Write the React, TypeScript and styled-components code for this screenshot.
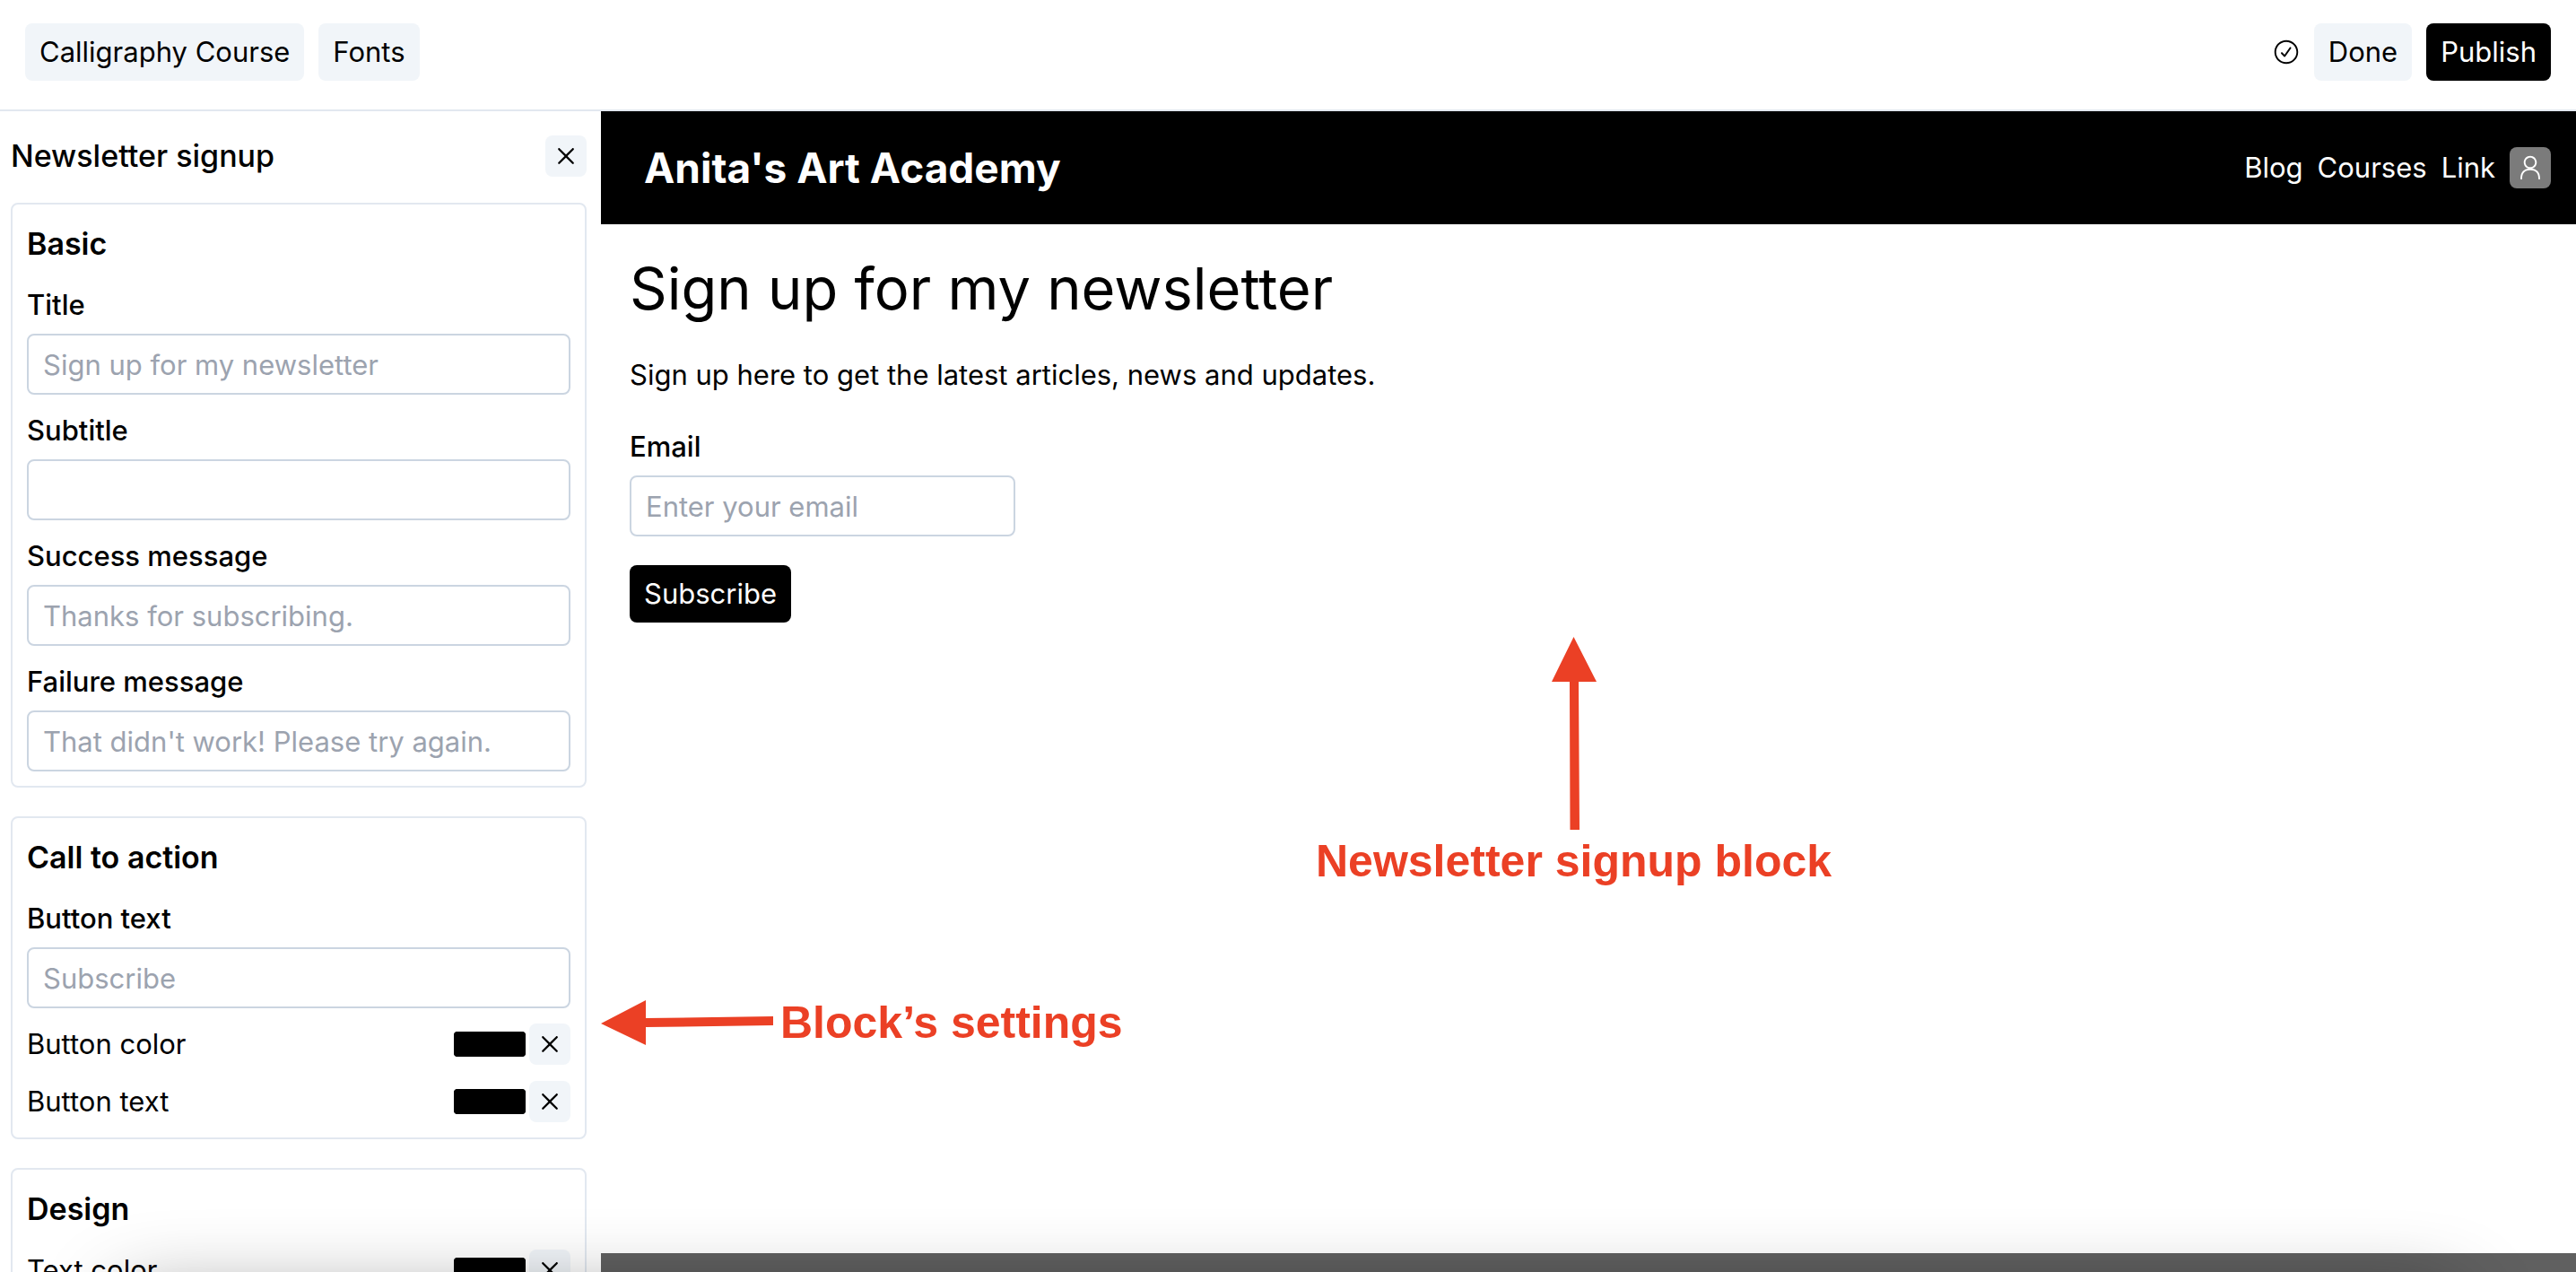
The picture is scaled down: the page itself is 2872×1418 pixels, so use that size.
import React, { useId } from "react";
import styled, { createGlobalStyle } from "styled-components";
import { RxCheckCircled, RxCross2, RxPerson } from "react-icons/rx";

const GlobalStyle = createGlobalStyle`
  *, *::before, *::after { box-sizing: border-box; }
  body {
    margin: 0;
    background: #fff;
    color: #000;
    font-family: Inter, "Liberation Sans", sans-serif;
    font-size: 31px;
    line-height: 48px;
  }
  h1, h2, h3, p { margin: 0; }
  button, input { font: inherit; color: inherit; }
  button { cursor: pointer; }
`;

const Page = styled.div`
  position: relative;
  display: flex;
  flex-direction: column;
  height: 100vh;
  overflow: hidden;
`;

const TopBar = styled.header`
  display: flex;
  flex: none;
  justify-content: space-between;
  padding: 26px 28px 32px;
  border-bottom: 2px solid #e2e8f0;
`;

const Group = styled.div`
  display: flex;
  align-items: center;
  gap: 16px;
`;

const Button = styled.button<{ $primary?: boolean }>`
  height: 64px;
  padding: 8px 16px;
  border: 0;
  border-radius: 8px;
  background: ${(p) => (p.$primary ? "#000" : "#f1f5f9")};
  color: ${(p) => (p.$primary ? "#fff" : "#000")};
`;

const SavedIcon = styled(RxCheckCircled)`
  width: 30px;
  height: 30px;
`;

const Body = styled.div`
  display: flex;
  flex: 1;
  min-height: 0;
`;

const Sidebar = styled.aside`
  display: flex;
  flex: none;
  flex-direction: column;
  gap: 28px;
  width: 670px;
  padding: 26px 16px 0 12px;
  overflow: hidden;
`;

const SidebarHead = styled.div`
  display: flex;
  flex: none;
  align-items: center;
  justify-content: space-between;
`;

const SidebarTitle = styled.h2`
  font-size: 34px;
  font-weight: 500;
  line-height: 48px;
`;

const IconButton = styled.button`
  display: flex;
  flex: none;
  align-items: center;
  justify-content: center;
  width: 46px;
  height: 46px;
  padding: 0;
  border: 0;
  border-radius: 8px;
  background: #f1f5f9;
  font-size: 30px;
`;

const Panels = styled.div`
  display: flex;
  flex-direction: column;
  gap: 32px;
`;

const Panel = styled.section`
  display: flex;
  flex-direction: column;
  gap: 16px;
  padding: 16px;
  border: 2px solid #e2e8f0;
  border-radius: 8px;
`;

const PanelTitle = styled.h3`
  font-size: 34px;
  font-weight: 600;
  line-height: 56px;
`;

const FieldBox = styled.div<{ $narrow?: boolean }>`
  display: flex;
  flex-direction: column;
  gap: 8px;
  width: ${(p) => (p.$narrow ? "430px" : "100%")};
`;

const FieldLabel = styled.label`
  font-weight: 500;
`;

const TextInput = styled.input`
  width: 100%;
  height: 68px;
  padding: 8px 16px;
  border: 2px solid #cbd5e1;
  border-radius: 8px;
  background: #fff;
  &::placeholder { color: #9ca3af; opacity: 1; }
`;

const ColorLine = styled.div`
  display: flex;
  align-items: center;
  gap: 4px;
  height: 48px;
`;

const ColorLabel = styled.label`
  flex: 1;
`;

const Swatch = styled.input`
  width: 80px;
  height: 28px;
  padding: 0;
  border: 0;
  border-radius: 4px;
  background: #000;
  appearance: none;
  &::-webkit-color-swatch-wrapper { padding: 0; }
  &::-webkit-color-swatch { border: 0; border-radius: 4px; }
`;

const Preview = styled.main`
  position: relative;
  display: flex;
  flex: 1;
  flex-direction: column;
  min-width: 0;
`;

const SiteHeader = styled.div`
  display: flex;
  flex: none;
  align-items: center;
  justify-content: space-between;
  height: 126px;
  padding: 0 28px 0 48px;
  background: #000;
  color: #fff;
`;

const Brand = styled.a`
  color: inherit;
  font-size: 46px;
  font-weight: 700;
  line-height: 64px;
  text-decoration: none;
`;

const NavLink = styled.a`
  color: inherit;
  text-decoration: none;
`;

const Avatar = styled(IconButton)`
  background: #7b7b7b;
  color: #fff;
`;

const Block = styled.form`
  display: flex;
  flex: 1;
  flex-direction: column;
  align-items: flex-start;
  gap: 32px;
  padding: 32px;
`;

const BlockTitle = styled.h1`
  font-size: 65px;
  font-weight: 400;
  line-height: 80px;
`;

const SiteFooter = styled.footer`
  flex: none;
  height: 21px;
  background: #606060;
`;

const Note = styled.div<{ $x: number; $y: number; $column?: boolean }>`
  position: absolute;
  left: ${(p) => p.$x}px;
  top: ${(p) => p.$y}px;
  display: flex;
  flex-direction: ${(p) => (p.$column ? "column" : "row")};
  align-items: center;
  gap: ${(p) => (p.$column ? "4px" : "8px")};
  color: #eb4025;
  font-family: "Liberation Sans", Arial, sans-serif;
  font-size: 50px;
  font-weight: 700;
  line-height: 60px;
  white-space: nowrap;
  pointer-events: none;
`;

const BottomShade = styled.div`
  position: absolute;
  right: 136px;
  bottom: -230px;
  left: 136px;
  height: 200px;
  box-shadow: 0 0 90px rgba(0, 0, 0, 0.44);
  pointer-events: none;
`;

function Field({ label, placeholder, narrow, type = "text" }: {
  label: string;
  placeholder?: string;
  narrow?: boolean;
  type?: string;
}) {
  const id = useId();
  return (
    <FieldBox $narrow={narrow}>
      <FieldLabel htmlFor={id}>{label}</FieldLabel>
      <TextInput id={id} type={type} placeholder={placeholder} />
    </FieldBox>
  );
}

function ColorRow({ label }: { label: string }) {
  const id = useId();
  return (
    <ColorLine>
      <ColorLabel htmlFor={id}>{label}</ColorLabel>
      <Swatch id={id} type="color" defaultValue="#000000" />
      <IconButton type="button" aria-label={`Reset ${label}`}>
        <RxCross2 />
      </IconButton>
    </ColorLine>
  );
}

export default function App() {
  return (
    <Page>
      <GlobalStyle />
      <TopBar>
        <Group>
          <Button type="button">Calligraphy Course</Button>
          <Button type="button">Fonts</Button>
        </Group>
        <Group>
          <SavedIcon aria-label="Saved" />
          <Button type="button">Done</Button>
          <Button type="button" $primary>Publish</Button>
        </Group>
      </TopBar>
      <Body>
        <Sidebar>
          <SidebarHead>
            <SidebarTitle>Newsletter signup</SidebarTitle>
            <IconButton type="button" aria-label="Close">
              <RxCross2 />
            </IconButton>
          </SidebarHead>
          <Panels>
            <Panel>
              <PanelTitle>Basic</PanelTitle>
              <Field label="Title" placeholder="Sign up for my newsletter" />
              <Field label="Subtitle" />
              <Field label="Success message" placeholder="Thanks for subscribing." />
              <Field label="Failure message" placeholder="That didn't work! Please try again." />
            </Panel>
            <Panel>
              <PanelTitle>Call to action</PanelTitle>
              <Field label="Button text" placeholder="Subscribe" />
              <ColorRow label="Button color" />
              <ColorRow label="Button text" />
            </Panel>
            <Panel>
              <PanelTitle>Design</PanelTitle>
              <ColorRow label="Text color" />
            </Panel>
          </Panels>
        </Sidebar>
        <Preview>
          <SiteHeader>
            <Brand href="#">Anita's Art Academy</Brand>
            <Group as="nav">
              <NavLink href="#">Blog</NavLink>
              <NavLink href="#">Courses</NavLink>
              <NavLink href="#">Link</NavLink>
              <Avatar type="button" aria-label="Account">
                <RxPerson />
              </Avatar>
            </Group>
          </SiteHeader>
          <Block onSubmit={(e) => e.preventDefault()}>
            <BlockTitle>Sign up for my newsletter</BlockTitle>
            <p>Sign up here to get the latest articles, news and updates.</p>
            <Field label="Email" type="email" placeholder="Enter your email" narrow />
            <Button $primary>Subscribe</Button>
          </Block>
          <SiteFooter />
          <Note $x={797} $y={586} $column>
            <svg width="50" height="216" viewBox="0 0 50 216" fill="currentColor" aria-hidden="true">
              <path d="M24.500 0 50 50H30L31 215H20.500L20 50H0Z" />
            </svg>
            Newsletter signup block
          </Note>
          <Note $x={0} $y={986}>
            <svg width="192" height="50" viewBox="0 0 192 50" fill="currentColor" aria-hidden="true">
              <path d="M0 26 50 0V20L192 18V28L50 30V50Z" />
            </svg>
            Block’s settings
          </Note>
        </Preview>
      </Body>
      <BottomShade />
    </Page>
  );
}
